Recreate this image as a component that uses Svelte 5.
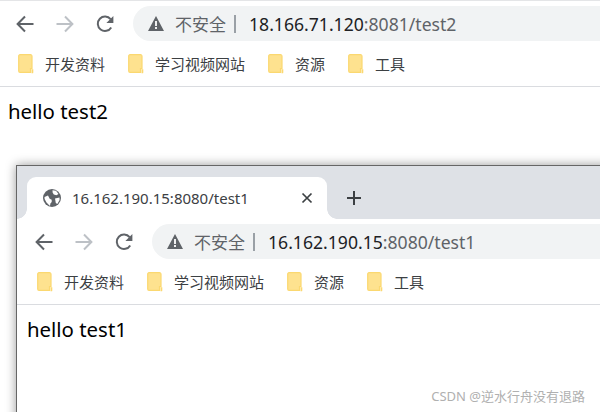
<script>
  const bookmarks = ['开发资料', '学习视频网站', '资源', '工具']
</script>

{#snippet toolbar(host, rest)}
  <div class="toolbar">
    <svg class="nav" viewBox="0 0 18 18" fill="none" stroke="#5f6368" stroke-width="2">
      <path d="M17.500 9H2M9 1.500 1.600 9 9 16.500" />
    </svg>
    <svg class="nav" viewBox="0 0 18 18" fill="none" stroke="#bdc1c6" stroke-width="2">
      <path d="M.5 9H16M9 1.500 16.400 9 9 16.500" />
    </svg>
    <svg class="nav" viewBox="0 0 18 18" fill="none" stroke="#5f6368" stroke-width="2">
      <path d="M15.200 12.400A7.200 7.200 0 1 1 14.600 4.200" />
      <path d="M17.400 1v7h-7z" fill="#5f6368" stroke="none" />
    </svg>
    <div class="omnibox">
      <svg class="warn" viewBox="0 0 16 15">
        <path d="M8 0 16 15H0z" fill="#5f6368" />
        <path d="M7.100 5h1.800v5H7.100zM7.100 11h1.800v2H7.100z" fill="#fff" />
      </svg>
      <span class="insecure">不安全</span>
      <span class="sep"></span>
      <span class="url">{host}<span class="rest">{rest}</span></span>
    </div>
  </div>
{/snippet}

{#snippet bookmarkBar()}
  <div class="bookmarks">
    {#each bookmarks as name}
      <div class="bookmark">
        <svg class="folder" viewBox="0 0 16 20">
          <path d="M2 .7h10.500a1.500 1.500 0 0 1 1.500 1.500v12.500h-1.500v3.600H2a1.300 1.300 0 0 1-1.300-1.300V2A1.300 1.300 0 0 1 2 .7z" fill="#fee28f" stroke="#fbd870" stroke-width="1.200" />
          <path d="M13.500 15.200h1.800v3.200a.9.9 0 0 1-.9.900h-.9z" fill="#fbd870" />
        </svg>
        <span>{name}</span>
      </div>
    {/each}
  </div>
{/snippet}

<div class="screen">
  <section class="page first">
    {@render toolbar('18.166.71.120', ':8081/test2')}
    {@render bookmarkBar()}
    <p class="hello">hello test2</p>
  </section>

  <section class="page window">
    <div class="tabstrip">
      <div class="tab">
        <svg class="globe" viewBox="0 0 18 18">
          <circle cx="9" cy="9" r="9" fill="#5f6368" />
          <path d="M1.500 8 5 6.600l1.700 3.200 2 1v2.200L7.400 14.600 7 17 3.500 13.500 1.600 10zM9.500 1.300 13 1.800 15.500 5 13.400 6.200 10.800 5.600 9.600 3.600zM12 9.500 16.500 8.500 16.600 11 14.300 15 12.800 14z" fill="#fff" />
        </svg>
        <span class="title">16.162.190.15:8080/test1</span>
        <svg class="close" viewBox="0 0 12 12" stroke="#3c4043" stroke-width="1.700">
          <path d="M1.500 1.500 10.500 10.500M10.500 1.500 1.500 10.500" />
        </svg>
      </div>
      <svg class="plus" viewBox="0 0 14 14" stroke="#3c4043" stroke-width="2">
        <path d="M7 0v14M0 7h14" />
      </svg>
    </div>
    {@render toolbar('16.162.190.15', ':8080/test1')}
    {@render bookmarkBar()}
    <p class="hello">hello test1</p>
  </section>

  <div class="watermark">CSDN @逆水行舟没有退路</div>
</div>

<style>
  :global(body) { margin: 0; background: #fff; }
  .screen {
    position: relative;
    width: 600px;
    height: 412px;
    overflow: hidden;
    background: #fff;
    font-family: "Noto Sans", "Noto Sans CJK SC", sans-serif;
  }
  .page { background: #fff; }
  .first { height: 165px; border-top: 1px solid #e4e5e7; box-sizing: border-box; padding-top: 5px; }
  .window {
    width: 640px;
    height: 300px;
    margin-left: 16px;
    border: 1px solid #666;
    box-shadow: 0 0 10px rgba(0, 0, 0, .4);
  }

  .tabstrip {
    display: flex;
    align-items: flex-end;
    height: 53px;
    background: #dee1e6;
    padding-left: 10px;
  }
  .tab {
    position: relative;
    display: flex;
    align-items: center;
    width: 300px;
    height: 42px;
    background: #fff;
    border-radius: 9px 9px 0 0;
  }
  .tab::before, .tab::after {
    content: '';
    position: absolute;
    bottom: 0;
    width: 10px;
    height: 10px;
  }
  .tab::before { left: -10px; background: radial-gradient(circle at 0 0, #dee1e6 9.5px, #fff 10px); }
  .tab::after { right: -10px; background: radial-gradient(circle at 100% 0, #dee1e6 9.5px, #fff 10px); }
  .globe { width: 18px; height: 18px; margin: 0 11px 0 16px; }
  .title { flex: 1; font-size: 15px; color: #3c4043; white-space: nowrap; }
  .close { width: 12px; height: 12px; margin-right: 14px; }
  .plus { width: 14px; height: 14px; margin: 0 0 14px 20px; }

  .toolbar { display: flex; align-items: center; height: 35px; padding-left: 16px; }
  .window .toolbar { margin-top: 5px; padding-left: 18px; }
  .nav { width: 18px; height: 18px; margin-right: 22px; }
  .nav:nth-child(3) { margin-right: 19px; }
  .omnibox {
    flex: 1;
    display: flex;
    align-items: center;
    height: 35px;
    background: #f1f3f4;
    border-radius: 18px 0 0 18px;
    padding-left: 15px;
    white-space: nowrap;
  }
  .warn { width: 16px; height: 15px; margin-right: 12px; }
  .insecure { font-size: 17px; color: #5f6368; margin-left: -1px; }
  .sep { width: 2px; height: 18px; background: #9aa0a6; margin: 0 13px 0 8px; }
  .url { font-size: 17.6px; color: #202124; }
  .rest { color: #5f6368; }

  .bookmarks {
    display: flex;
    align-items: center;
    gap: 23px;
    height: 45px;
    padding-left: 18px;
    border-bottom: 1px solid #dadce0;
  }
  .window .bookmarks { padding-left: 20px; }
  .bookmark { display: flex; align-items: center; gap: 12px; font-size: 15px; color: #3c4043; }
  .folder { width: 16px; height: 20px; margin-right: -1px; }

  .hello { margin: 0; padding: 10px 0 0 8px; font-size: 20.4px; line-height: 28px; color: #000; }
  .window .hello { padding-left: 10px; }

  .watermark {
    position: absolute;
    right: 15px;
    bottom: 7px;
    font-size: 13px;
    line-height: 18px;
    color: #b0b0b0;
    white-space: nowrap;
  }
</style>
